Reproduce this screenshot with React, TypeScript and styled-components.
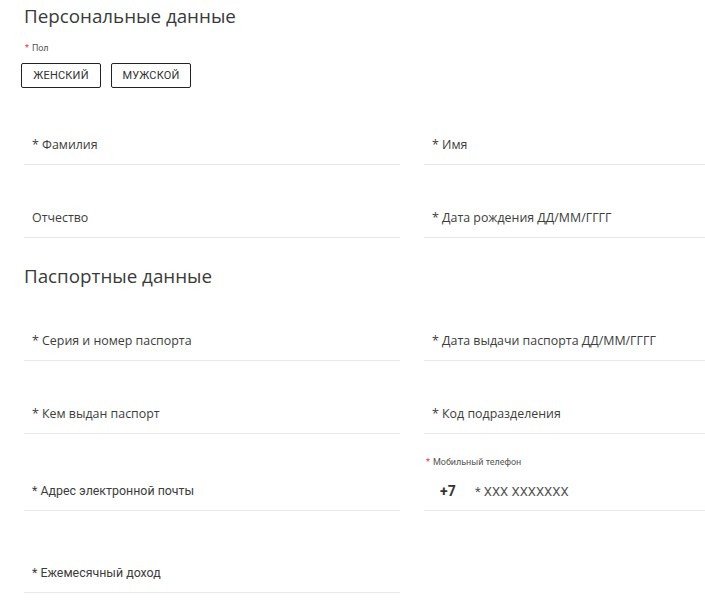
import styled, { createGlobalStyle } from 'styled-components'

const GlobalStyle = createGlobalStyle`
  html, body {
    margin: 0;
    padding: 0;
    background: #fff;
    overflow: hidden;
  }
  body {
    font-family: "Open Sans", "Liberation Sans", sans-serif;
    color: #333;
  }
`

const Page = styled.div`
  width: 705px;
  padding-left: 24px;
  box-sizing: border-box;
`

const Heading = styled.h2<{ $top: number }>`
  margin: ${p => p.$top}px 0 0;
  font-family: "Open Sans", "Liberation Sans", sans-serif;
  font-weight: 400;
  font-size: 18.8px;
  line-height: 23px;
  color: #3a3a3a;
`

const SmallLabel = styled.div<{ $top?: number }>`
  margin-top: ${p => p.$top ?? 0}px;
  padding-left: 1px;
  font-family: Roboto, "Liberation Sans", sans-serif;
  font-size: 9px;
  line-height: 12px;
  color: #555;
`

const Req = styled.span`
  color: #e53935;
  margin-right: 3px;
`

const Toggle = styled.div`
  display: flex;
  gap: 10px;
  margin: 9px 0 0 -3px;
`

const ToggleButton = styled.button`
  width: 80px;
  height: 25px;
  padding: 0;
  background: #fff;
  border: 1px solid #222;
  border-radius: 2px;
  font-family: Roboto, "Liberation Sans", sans-serif;
  font-size: 11px;
  color: #333;
  text-transform: uppercase;
  letter-spacing: 0.2px;
  cursor: pointer;
`

const Grid = styled.div<{ $top?: number }>`
  display: grid;
  grid-template-columns: 376px 376px;
  column-gap: 24px;
  margin-top: ${p => p.$top ?? 0}px;
`

const Field = styled.div<{ $h: number }>`
  height: ${p => p.$h}px;
  box-sizing: border-box;
  display: flex;
  flex-direction: column;
  justify-content: flex-end;
  padding: 0 0 9px 8px;
  border-bottom: 1px solid #e8e8e8;
`

const Placeholder = styled.div<{ $roboto?: boolean }>`
  font-family: ${p => (p.$roboto ? 'Roboto, ' : '')}"Open Sans", "Liberation Sans", sans-serif;
  font-size: 12.4px;
  line-height: 20px;
  color: #3d3d3d;
  white-space: nowrap;
`

const PhoneLabel = styled(SmallLabel)`
  margin: 0 0 13px -7px;
`

const PhoneRow = styled.div`
  display: flex;
  align-items: center;
  padding-left: 8px;
  height: 20px;
`

const Code = styled.span`
  font-family: Roboto, "Liberation Sans", sans-serif;
  font-weight: 700;
  font-size: 14px;
  color: #333;
  width: 35px;
`

const PhoneInput = styled.span`
  font-family: Roboto, "Liberation Sans", sans-serif;
  font-size: 13px;
  color: #555;
`

const Empty = styled.div``

export default function App() {
  return (
    <Page>
      <GlobalStyle />
      <Heading $top={5}>Персональные данные</Heading>
      <SmallLabel $top={14}>
        <Req>*</Req>Пол
      </SmallLabel>
      <Toggle>
        <ToggleButton>Женский</ToggleButton>
        <ToggleButton>Мужской</ToggleButton>
      </Toggle>

      <Grid $top={4}>
        <Field $h={73}>
          <Placeholder>* Фамилия</Placeholder>
        </Field>
        <Field $h={73}>
          <Placeholder>* Имя</Placeholder>
        </Field>
        <Field $h={73}>
          <Placeholder>Отчество</Placeholder>
        </Field>
        <Field $h={73}>
          <Placeholder>* Дата рождения ДД/ММ/ГГГГ</Placeholder>
        </Field>
      </Grid>

      <Heading $top={27}>Паспортные данные</Heading>

      <Grid>
        <Field $h={73}>
          <Placeholder>* Серия и номер паспорта</Placeholder>
        </Field>
        <Field $h={73}>
          <Placeholder>* Дата выдачи паспорта ДД/ММ/ГГГГ</Placeholder>
        </Field>
        <Field $h={73}>
          <Placeholder>* Кем выдан паспорт</Placeholder>
        </Field>
        <Field $h={73}>
          <Placeholder>* Код подразделения</Placeholder>
        </Field>
        <Field $h={77}>
          <Placeholder $roboto>* Адрес электронной почты</Placeholder>
        </Field>
        <Field $h={77}>
          <PhoneLabel>
            <Req>*</Req>Мобильный телефон
          </PhoneLabel>
          <PhoneRow>
            <Code>+7</Code>
            <PhoneInput>* XXX XXXXXXX</PhoneInput>
          </PhoneRow>
        </Field>
        <Field $h={82}>
          <Placeholder $roboto>* Ежемесячный доход</Placeholder>
        </Field>
        <Empty />
      </Grid>
    </Page>
  )
}
